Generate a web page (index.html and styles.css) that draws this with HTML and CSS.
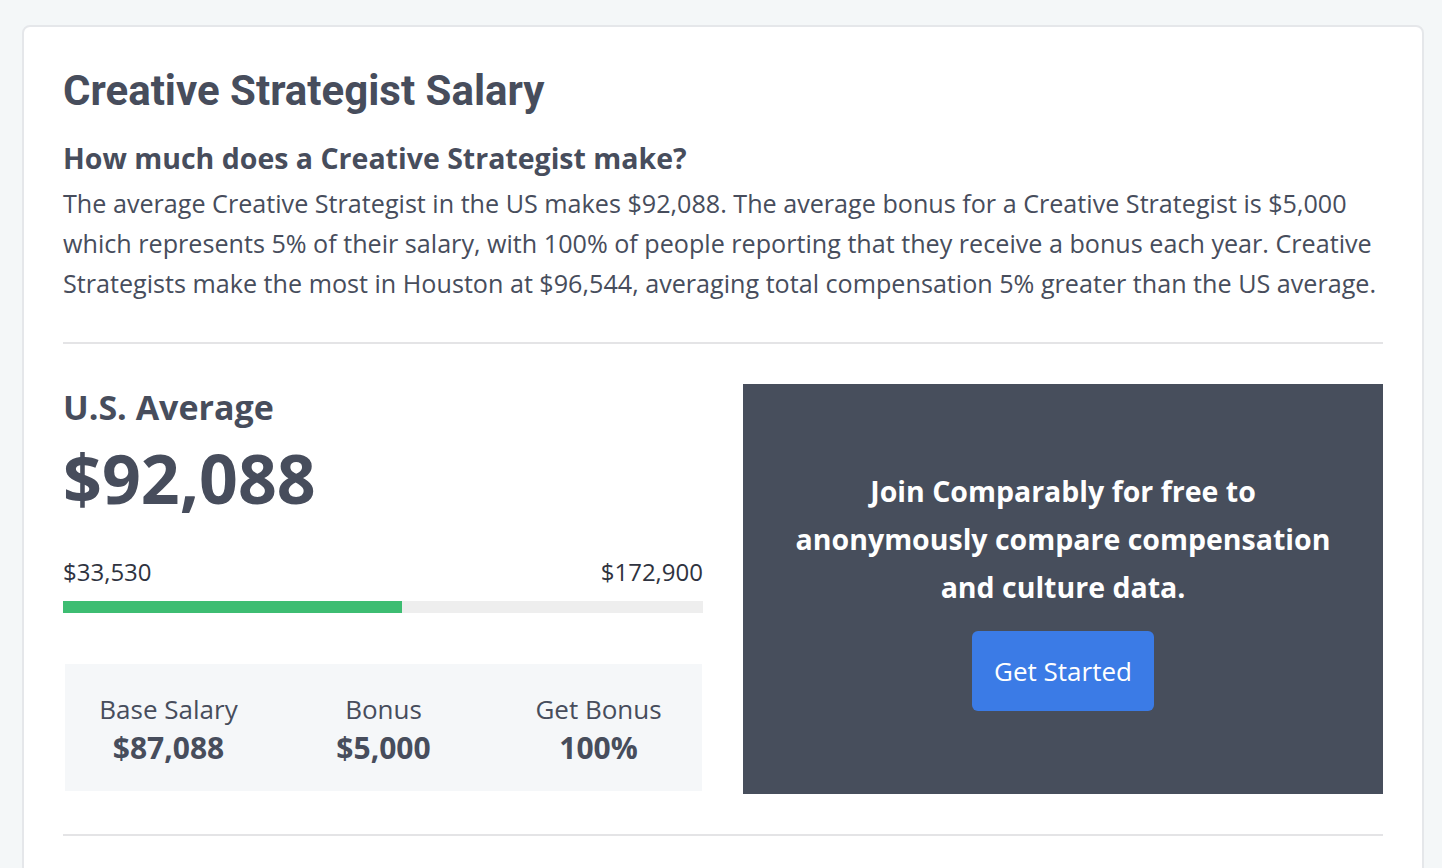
FILE: index.html
```html
<!DOCTYPE html>
<html lang="en">
<head>
<meta charset="utf-8">
<title>Creative Strategist Salary</title>
<link rel="stylesheet" href="styles.css">
</head>
<body>
<div class="card">
  <h1 class="title">Creative Strategist Salary</h1>
  <h2 class="subtitle">How much does a Creative Strategist make?</h2>
  <p class="intro">The average Creative Strategist in the US makes $92,088. The average bonus for a Creative Strategist is $5,000 which represents 5% of their salary, with 100% of people reporting that they receive a bonus each year. Creative Strategists make the most in Houston at $96,544, averaging total compensation 5% greater than the US average.</p>
  <hr class="rule">
  <div class="split">
    <div class="left">
      <div class="avg-label">U.S. Average</div>
      <div class="avg-value">$92,088</div>
      <div class="range">
        <span>$33,530</span>
        <span>$172,900</span>
      </div>
      <div class="bar"><div class="bar-fill" style="width:53%"></div></div>
      <div class="stats">
        <div class="stat">
          <div class="stat-label">Base Salary</div>
          <div class="stat-value">$87,088</div>
        </div>
        <div class="stat">
          <div class="stat-label">Bonus</div>
          <div class="stat-value">$5,000</div>
        </div>
        <div class="stat">
          <div class="stat-label">Get Bonus</div>
          <div class="stat-value">100%</div>
        </div>
      </div>
    </div>
    <div class="cta">
      <p class="cta-text">Join Comparably for free to anonymously compare compensation and culture data.</p>
      <a class="cta-btn" href="#">Get Started</a>
    </div>
  </div>
  <hr class="rule rule-bottom">
</div>
</body>
</html>
```

FILE: styles.css
```css
* { box-sizing: border-box; }
html, body { margin: 0; padding: 0; }
body {
  background: #f4f7f8;
  font-family: "Open Sans", "Liberation Sans", sans-serif;
  color: #474d5c;
  padding: 25px 18px 0 22px;
  height: 868px;
  overflow: hidden;
}
.card {
  background: #ffffff;
  border: 2px solid #e5e7ea;
  border-radius: 8px;
  padding: 39px 39px 40px 39px;
  min-height: 900px;
}
.title {
  font-family: Roboto, "Liberation Sans", sans-serif;
  font-weight: 700;
  font-size: 42px;
  line-height: 50px;
  letter-spacing: 0;
  margin: 0 0 22px 0;
  color: #474d5c;
}
.subtitle {
  font-size: 28.5px;
  font-weight: 700;
  line-height: 40px;
  margin: 0 0 5px 0;
}
.intro {
  font-size: 25.15px;
  line-height: 40px;
  margin: 0;
}
.rule {
  border: 0;
  border-top: 2px solid #e4e4e6;
  margin: 39px 0 40px 0;
}
.split {
  display: grid;
  grid-template-columns: minmax(0, 1fr) minmax(0, 1fr);
  gap: 40px;
}
.avg-label {
  font-size: 34px;
  font-weight: 700;
  line-height: 46px;
}
.avg-value {
  font-size: 68px;
  font-weight: 700;
  line-height: 80px;
  margin-top: 8px;
}
.range {
  display: flex;
  justify-content: space-between;
  font-size: 24px;
  line-height: 30px;
  margin-top: 39px;
  color: #2f3340;
}
.bar {
  height: 12px;
  background: #eeeeee;
  margin-top: 14px;
}
.bar-fill {
  height: 100%;
  background: #3dbd72;
}
.stats {
  display: grid;
  grid-template-columns: repeat(3, minmax(0, 1fr));
  column-gap: 8px;
  background: #f5f7f9;
  margin: 51px 1px 0 2px;
  padding: 27px 0 22px 0;
}
.stat {
  text-align: center;
}
.stat-label {
  font-size: 26px;
  line-height: 36px;
}
.stat-value {
  font-size: 30px;
  font-weight: 700;
  line-height: 42px;
}
.cta {
  background: #474e5c;
  color: #fff;
  display: flex;
  flex-direction: column;
  align-items: center;
  justify-content: center;
  padding: 0 50px;
  height: 410px;
}
.cta-text {
  font-size: 28.5px;
  font-weight: 700;
  line-height: 48px;
  text-align: center;
  margin: 0 0 20px 0;
  letter-spacing: 0;
}
.cta-btn {
  display: inline-block;
  background: #3b7be6;
  color: #fff;
  text-decoration: none;
  font-size: 26px;
  line-height: 80px;
  padding: 0 22px;
  border-radius: 6px;
}
.rule-bottom { margin-top: 40px; }
```
